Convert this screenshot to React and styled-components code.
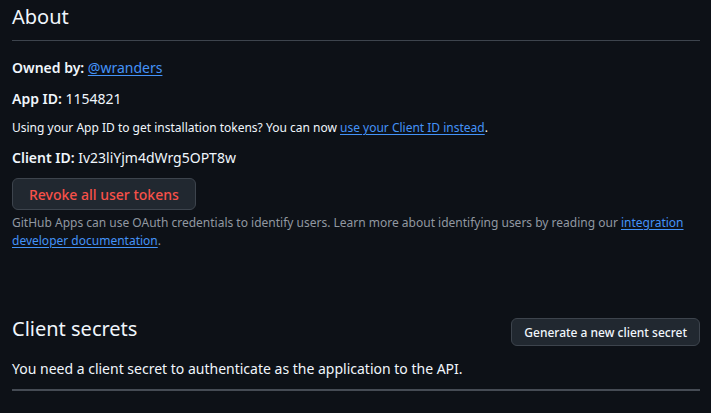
import React from "react";
import styled, { createGlobalStyle } from "styled-components";

const Global = createGlobalStyle`
  html, body { margin: 0; padding: 0; background: #0d1117; }
  body {
    font-family: "Noto Sans", "Liberation Sans", sans-serif;
    color: #f0f6fc;
    font-size: 14px;
    line-height: 1.5;
  }
`;

const Page = styled.div`
  padding: 2px 11px 20px 12px;
  width: 688px;
`;

const Section = styled.section`
  display: flex;
  flex-direction: column;
`;

const Subhead = styled.div`
  display: flex;
  align-items: flex-start;
  justify-content: space-between;
  padding-bottom: ${(p) => (p.$bordered ? "8px" : "0")};
  border-bottom: ${(p) => (p.$bordered ? "1px solid #3d444d" : "none")};
  margin-bottom: ${(p) => (p.$bordered ? "16px" : "0")};
`;

const Heading = styled.h2`
  margin: 0;
  font-size: 20px;
  font-weight: 400;
  line-height: 30px;
  color: #f0f6fc;
`;

const Field = styled.p`
  margin: 0 0 10px;
  font-size: ${(p) => (p.$small ? "12px" : "14px")};
  line-height: ${(p) => (p.$small ? "18px" : "21px")};
  color: #f0f6fc;
`;

const Label = styled.strong`
  font-weight: 600;
`;

const Link = styled.a`
  color: #4493f8;
  text-decoration: underline;
  text-underline-offset: 2px;
  cursor: pointer;
`;

const Button = styled.button`
  align-self: ${(p) => (p.$start ? "flex-start" : "auto")};
  font-family: inherit;
  font-size: ${(p) => (p.$small ? "12px" : "14px")};
  font-weight: 500;
  height: ${(p) => (p.$small ? "28px" : "32px")};
  padding: 0 ${(p) => (p.$small ? "12px" : "16px")};
  margin-top: ${(p) => (p.$small ? "4px" : "0")};
  border-radius: 6px;
  border: 1px solid #3d444d;
  background: #212830;
  color: ${(p) => (p.$danger ? "#f85149" : "#f0f6fc")};
  cursor: pointer;
  white-space: nowrap;
`;

const Note = styled.p`
  margin: 4px 0 0;
  font-size: 12px;
  line-height: 18px;
  color: #9198a1;
`;

const Spacer = styled.div`
  height: 64px;
`;

const Description = styled.p`
  margin: 12px 0 0;
  padding-bottom: 10px;
  border-bottom: 2px solid #454b54;
  font-size: 14px;
  line-height: 21px;
  color: #f0f6fc;
`;

export default function App() {
  return (
    <>
      <Global />
      <Page>
        <Section>
          <Subhead $bordered>
            <Heading>About</Heading>
          </Subhead>
          <Field>
            <Label>Owned by:</Label> <Link>@wranders</Link>
          </Field>
          <Field>
            <Label>App ID:</Label> 1154821
          </Field>
          <Field $small>
            Using your App ID to get installation tokens? You can now{" "}
            <Link>use your Client ID instead</Link>.
          </Field>
          <Field>
            <Label>Client ID:</Label> Iv23liYjm4dWrg5OPT8w
          </Field>
          <Button $danger $start>
            Revoke all user tokens
          </Button>
          <Note>
            GitHub Apps can use OAuth credentials to identify users. Learn more
            about identifying users by reading our{" "}
            <Link>integration developer documentation</Link>.
          </Note>
        </Section>
        <Spacer />
        <Section>
          <Subhead>
            <Heading>Client secrets</Heading>
            <Button $small>Generate a new client secret</Button>
          </Subhead>
          <Description>
            You need a client secret to authenticate as the application to the
            API.
          </Description>
        </Section>
      </Page>
    </>
  );
}
